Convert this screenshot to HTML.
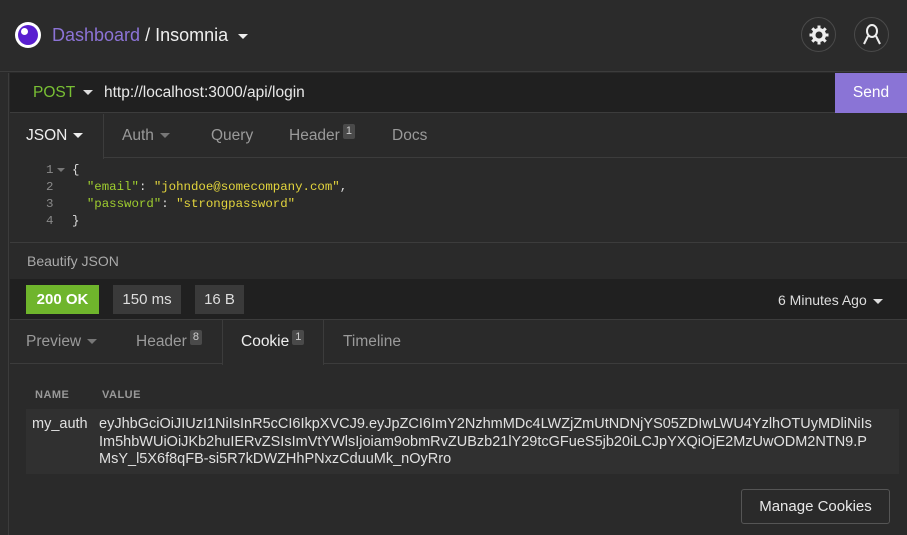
<!DOCTYPE html>
<html><head><style>
*{box-sizing:border-box;margin:0;padding:0}
body{width:907px;height:535px;background:#2a2a2a;font-family:"Liberation Sans",sans-serif;color:#ddd;position:relative;overflow:hidden;font-size:15px}
.abs{position:absolute}
.caret{display:inline-block;width:0;height:0;border-left:5px solid transparent;border-right:5px solid transparent;border-top:5px solid currentColor;vertical-align:middle;margin-left:6px}
.tab{position:absolute;top:0;height:44px;line-height:44px;color:#9a9a9a;font-size:15.5px}
.badge{display:inline-block;background:#4a4a4a;color:#ccc;font-size:11px;line-height:15px;padding:0 3px;border-radius:2px;vertical-align:top;margin-top:10px;margin-left:3px}
.mono{font-family:"Liberation Mono",monospace;font-size:12.4px}
</style></head><body>
<div class="abs" style="left:0;top:0;width:907px;height:72px;background:#2b2b2b;border-bottom:1px solid #3c3c3c"></div>
<div class="abs" style="left:15px;top:22px;width:26px;height:26px;border-radius:50%;background:#fff"></div>
<div class="abs" style="left:18px;top:25px;width:20px;height:20px;border-radius:50%;background:#5a1fd0"></div>
<div class="abs" style="left:21px;top:28px;width:7px;height:7px;border-radius:50%;background:#fff"></div>
<div class="abs" style="left:52px;top:25px;font-size:18px;color:#8c73d6">Dashboard <span style="color:#eee">/ Insomnia</span><span class="caret" style="color:#eee;margin-left:10px"></span></div>
<div class="abs" style="left:801px;top:17px;width:35px;height:35px;border-radius:50%;border:1px solid #4a4a4a;text-align:center;line-height:33px">
<svg width="20" height="20" viewBox="0 0 20 20" style="vertical-align:middle"><g fill="#eee"><circle cx="10" cy="10" r="7"/><rect x="8.5" y="0.5" width="3" height="19"/><rect x="0.5" y="8.5" width="19" height="3"/><rect x="8.5" y="0.5" width="3" height="19" transform="rotate(45 10 10)"/><rect x="8.5" y="0.5" width="3" height="19" transform="rotate(-45 10 10)"/></g><circle cx="10" cy="10" r="3.5" fill="#2b2b2b"/></svg></div>
<div class="abs" style="left:854px;top:17px;width:35px;height:35px;border-radius:50%;border:1px solid #4a4a4a;text-align:center;line-height:33px">
<svg width="20" height="22" viewBox="0 0 20 22" style="vertical-align:middle" fill="none" stroke="#eee" stroke-width="2"><ellipse cx="10" cy="7" rx="5" ry="6"/><path d="M6 12 L2 20 M14 12 L18 20"/></svg></div>
<div class="abs" style="left:0;top:73px;width:9px;height:462px;background:#2b2b2b;border-right:1px solid #3c3c3c"></div>
<div class="abs" style="left:10px;top:73px;width:825px;height:40px;background:#202020;border-bottom:1px solid #3c3c3c"></div>
<div class="abs" style="left:33px;top:84px;font-size:15.5px;color:#79c034">POST<span class="caret" style="color:#ddd;margin-left:8px"></span></div>
<div class="abs" style="left:104px;top:84px;font-size:15.5px;color:#e8e8e8">http://localhost:3000/api/login</div>
<div class="abs" style="left:835px;top:73px;width:72px;height:40px;background:#8a74d6;color:#fff;text-align:center;line-height:40px;font-size:15.5px">Send</div>
<div class="abs" style="left:10px;top:114px;width:897px;height:44px;border-bottom:1px solid #3c3c3c">
<div class="tab" style="left:0;width:94px;padding-left:16px;color:#eee;background:#2a2a2a;border-right:1px solid #3c3c3c;height:45px">JSON<span class="caret"></span></div>
<div class="tab" style="left:112px">Auth<span class="caret" style="color:#777"></span></div>
<div class="tab" style="left:201px">Query</div>
<div class="tab" style="left:279px">Header<span class="badge">1</span></div>
<div class="tab" style="left:382px">Docs</div>
</div>
<div class="abs" style="left:103px;top:157px;width:804px;height:1px;background:#3c3c3c"></div>
<div class="abs mono" style="left:46px;top:162px;line-height:17px;color:#8a8a8a">1<br>2<br>3<br>4</div>
<div class="abs" style="left:57px;top:168px;border-left:4px solid transparent;border-right:4px solid transparent;border-top:4px solid #777"></div>
<div class="abs mono" style="left:72px;top:162px;line-height:17px;color:#ddd;white-space:pre">{
  <span style="color:#9fce2f">"email"</span>: <span style="color:#e3d53d">"johndoe@somecompany.com"</span>,
  <span style="color:#9fce2f">"password"</span>: <span style="color:#e3d53d">"strongpassword"</span>
}</div>
<div class="abs" style="left:10px;top:242px;width:897px;height:1px;background:#3c3c3c"></div>
<div class="abs" style="left:27px;top:253px;font-size:14px;color:#aaa">Beautify JSON</div>
<div class="abs" style="left:10px;top:279px;width:897px;height:41px;background:#202020;border-bottom:1px solid #3c3c3c"></div>
<div class="abs" style="left:26px;top:285px;width:73px;height:29px;background:#6fb52c;color:#fff;font-weight:bold;text-align:center;line-height:29px;font-size:15px">200 OK</div>
<div class="abs" style="left:113px;top:285px;width:68px;height:29px;background:#3a3a3a;color:#ddd;text-align:center;line-height:29px">150 ms</div>
<div class="abs" style="left:195px;top:285px;width:49px;height:29px;background:#3a3a3a;color:#ddd;text-align:center;line-height:29px">16 B</div>
<div class="abs" style="left:778px;top:292px;font-size:14px;color:#ddd">6 Minutes Ago<span class="caret"></span></div>
<div class="abs" style="left:10px;top:320px;width:897px;height:44px;border-bottom:1px solid #3c3c3c">
<div class="tab" style="left:16px">Preview<span class="caret" style="color:#777"></span></div>
<div class="tab" style="left:126px">Header<span class="badge">8</span></div>
<div class="tab" style="left:212px;width:102px;padding-left:18px;color:#eee;border-left:1px solid #3c3c3c;border-right:1px solid #3c3c3c;height:45px;background:#2a2a2a">Cookie<span class="badge">1</span></div>
<div class="tab" style="left:333px">Timeline</div>
</div>
<div class="abs" style="left:35px;top:389px;font-size:11px;font-weight:bold;color:#999;letter-spacing:.5px">NAME</div>
<div class="abs" style="left:102px;top:389px;font-size:11px;font-weight:bold;color:#999;letter-spacing:.5px">VALUE</div>
<div class="abs" style="left:26px;top:409px;width:873px;height:65px;background:#303030"></div>
<div class="abs" style="left:32px;top:416px;font-size:14.5px;color:#e0e0e0">my_auth</div>
<div class="abs" style="left:99px;top:416px;width:800px;font-size:14.5px;line-height:17.5px;color:#e0e0e0;white-space:nowrap">eyJhbGciOiJIUzI1NiIsInR5cCI6IkpXVCJ9.eyJpZCI6ImY2NzhmMDc4LWZjZmUtNDNjYS05ZDIwLWU4YzlhOTUyMDliNiIs<br>Im5hbWUiOiJKb2huIERvZSIsImVtYWlsIjoiam9obmRvZUBzb21lY29tcGFueS5jb20iLCJpYXQiOjE2MzUwODM2NTN9.P<br>MsY_l5X6f8qFB-si5R7kDWZHhPNxzCduuMk_nOyRro</div>
<div class="abs" style="left:741px;top:489px;width:149px;height:35px;border:1px solid #555;border-radius:3px;text-align:center;line-height:33px;font-size:15px;color:#e8e8e8">Manage Cookies</div>
</body></html>
